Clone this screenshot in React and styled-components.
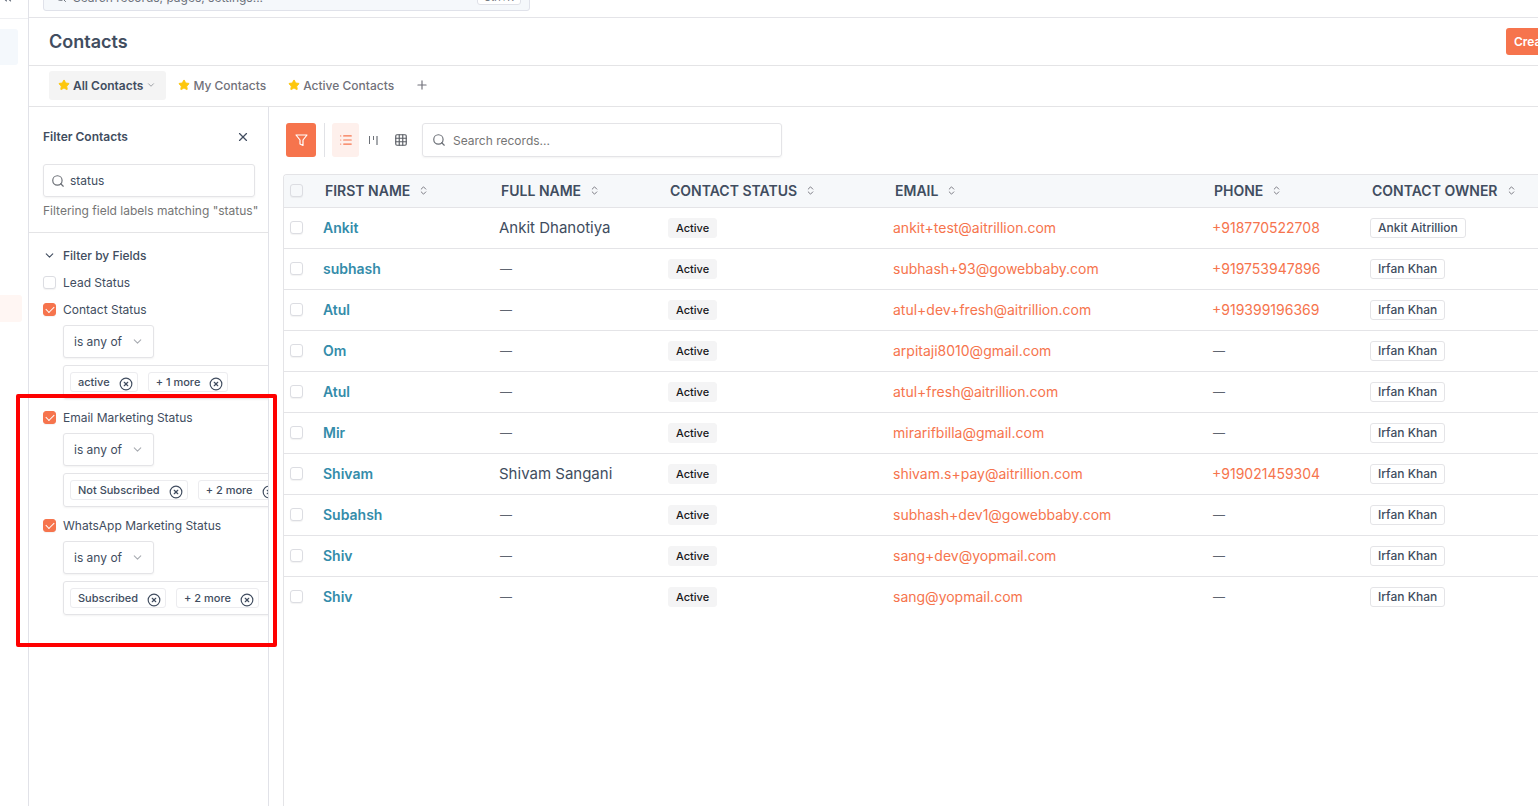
import styled, { createGlobalStyle } from 'styled-components';
import { ChevronDown, ChevronsLeft, ChevronsUpDown, CircleX, Grid3x3, List, Plus, Search, Star, X } from 'lucide-react';

const GlobalStyle = createGlobalStyle`
    * {
        box-sizing: border-box;
    }

    body {
        margin: 0;
        background: #fff;
        color: #414d60;
        font-family: Inter, "Open Sans", sans-serif;
        font-size: 12px;
        line-height: 16px;
    }

    button, input, select {
        font-family: inherit;
        color: inherit;
    }

    svg {
        display: block;
        flex-shrink: 0;
    }
`;

const Page = styled.div`
    position: relative;
    display: flex;
    min-height: 100vh;
    overflow: hidden;
`;

const Rail = styled.nav`
    flex: 0 0 29px;
    border-right: 1px solid #e1e2e8;
`;

const RailTop = styled.div`
    display: flex;
    align-items: flex-end;
    height: 19px;
    padding-bottom: 13px;
    border-bottom: 1px solid #eeeff2;
    overflow: hidden;

    button {
        padding: 0;
        border: 0;
        background: none;
        color: #5b6473;
    }
`;

const RailItem = styled.a`
    display: block;
    width: ${({ $width }) => $width}px;
    height: ${({ $height }) => $height}px;
    margin-top: ${({ $top }) => $top}px;
    border-radius: 0 3px 3px 0;
    background: ${({ $tone }) => $tone};
`;

const Content = styled.div`
    flex: 1;
    min-width: 0;
    display: flex;
    flex-direction: column;
`;

const TopBar = styled.div`
    display: flex;
    align-items: flex-end;
    height: 18px;
    padding: 0 14px 6px;
    border-bottom: 1px solid #e4e4e8;
    overflow: hidden;
`;

const GlobalSearch = styled.label`
    display: flex;
    align-items: center;
    gap: 6px;
    flex: 0 0 487px;
    height: 28px;
    padding: 0 8px 0 11px;
    border: 1px solid #e0e2ea;
    border-radius: 3px;
    background: #f5f8fb;
    color: #6c727c;

    input {
        flex: 1;
        min-width: 0;
        padding: 0;
        border: 0;
        background: none;
        outline: none;
        font-size: 12px;
    }

    input::placeholder {
        color: #6c727c;
    }
`;

const KeyHint = styled.kbd`
    padding: 0 6px;
    border: 1px solid #dfe1e8;
    border-radius: 3px;
    background: #fff;
    font-family: inherit;
    font-size: 10px;
    line-height: 14px;
`;

const TitleBar = styled.header`
    display: flex;
    align-items: center;
    justify-content: space-between;
    height: 48px;
    padding-left: 20px;
    border-bottom: 1px solid #e4e4e6;

    h1 {
        margin: 0;
        font-size: 18px;
        line-height: 24px;
        font-weight: 600;
    }
`;

const CreateSlot = styled.div`
    width: 32px;
    overflow: hidden;
`;

const CreateButton = styled.button`
    display: block;
    height: 27px;
    padding: 0 8px;
    border: 0;
    border-radius: 3px;
    background: #f6744d;
    color: #fff;
    font-size: 12px;
    font-weight: 600;
    white-space: nowrap;
`;

const Tabs = styled.nav`
    display: flex;
    align-items: center;
    gap: 3px;
    height: 41px;
    padding: 0 0 2px 20px;
    border-bottom: 1px solid #e4e4e6;
`;

const Tab = styled.button`
    display: flex;
    align-items: center;
    gap: 3px;
    height: 29px;
    padding: 0 10px 0 9px;
    border: 0;
    border-radius: 3px;
    background: ${({ $active }) => ($active ? '#f4f4f4' : 'none')};
    color: ${({ $active }) => ($active ? '#414d60' : '#71717a')};
    font-size: 12px;
    font-weight: ${({ $active }) => ($active ? 600 : 500)};
`;

const Columns = styled.div`
    flex: 1;
    display: flex;
`;

const FilterPanel = styled.aside`
    flex: 0 0 240px;
    min-width: 0;
    border-right: 1px solid #e1e2e8;
    overflow: hidden;
`;

const FilterHead = styled.div`
    padding: 20px 13px 13px 14px;
    border-bottom: 1px solid #e4e4e6;

    p {
        margin: 6px 0 0;
        font-size: 12px;
        color: #757575;
        white-space: nowrap;
    }
`;

const FilterTitle = styled.div`
    display: flex;
    align-items: center;
    justify-content: space-between;
    height: 20px;
    margin-bottom: 17px;

    h2 {
        margin: 0;
        font-size: 12px;
        font-weight: 600;
    }
`;

const IconButton = styled.button`
    display: flex;
    align-items: center;
    justify-content: center;
    height: ${({ $height }) => $height || 20}px;
    width: ${({ $width }) => $width || 24}px;
    padding: 0;
    border: 0;
    border-radius: 3px;
    background: ${({ $background }) => $background || 'none'};
    color: ${({ $color }) => $color || 'inherit'};
`;

const SearchBox = styled.label`
    display: flex;
    align-items: center;
    gap: ${({ $gap }) => $gap}px;
    width: ${({ $width }) => $width || '100%'};
    height: ${({ $height }) => $height || 33}px;
    padding: 0 ${({ $padding }) => $padding}px;
    border: 1px solid #e4e4e7;
    border-radius: 3px;
    box-shadow: 0 1px 2px rgba(0, 0, 0, 0.05);
    color: #6b6f76;

    input {
        flex: 1;
        min-width: 0;
        padding: 0;
        border: 0;
        outline: none;
        background: none;
        color: #414d60;
        font-size: 12px;
    }

    input::placeholder {
        color: #757575;
    }
`;

const FilterFields = styled.div`
    padding: 14px 0 0 14px;
`;

const FieldsToggle = styled.button`
    display: flex;
    align-items: center;
    gap: 7px;
    height: 16px;
    margin-bottom: 10px;
    padding: 0;
    border: 0;
    background: none;
    font-size: 12px;
    font-weight: 500;
`;

const Field = styled.div`
    margin-bottom: 8px;
`;

const FieldLabel = styled.label`
    display: flex;
    align-items: center;
    gap: 7px;
    height: 19px;
    font-size: 12px;
    white-space: nowrap;
`;

const Checkbox = styled.input.attrs({ type: 'checkbox' })`
    appearance: none;
    display: flex;
    align-items: center;
    justify-content: center;
    flex: 0 0 auto;
    width: 13px;
    height: 13px;
    margin: 0;
    border: 1px solid #dcdde2;
    border-radius: 3px;
    background: ${({ $background }) => $background || '#fff'};
    box-shadow: 0 1px 1px rgba(0, 0, 0, 0.05);

    &:checked {
        border-color: #f6744d;
        background: #f6744d;
    }

    &:checked::after {
        content: '';
        width: 7px;
        height: 4px;
        margin-bottom: 2px;
        border-left: 1px solid #fff;
        border-bottom: 1px solid #fff;
        transform: rotate(-45deg);
    }
`;

const Condition = styled.div`
    padding: 6px 0 1px 20px;
`;

const OperatorBox = styled.div`
    display: grid;
    width: 91px;
    align-items: center;

    select, svg {
        grid-area: 1 / 1;
    }

    select {
        appearance: none;
        width: 100%;
        height: 33px;
        padding: 0 10px;
        border: 1px solid #e4e4e7;
        border-radius: 3px;
        background: #fff;
        box-shadow: 0 1px 2px rgba(0, 0, 0, 0.05);
        font-size: 12px;
    }

    svg {
        justify-self: end;
        margin-right: 10px;
        color: #a9acb2;
        pointer-events: none;
    }
`;

const ValueBox = styled.div`
    display: flex;
    align-items: center;
    gap: 10px;
    width: 230px;
    height: 34px;
    margin-top: 7px;
    padding: 0 6px;
    border: 1px solid #e4e4e7;
    border-radius: 3px;
    box-shadow: 0 1px 2px rgba(0, 0, 0, 0.05);
`;

const Chip = styled.span`
    display: flex;
    align-items: center;
    gap: 9px;
    height: 20px;
    padding: 0 4px 0 7px;
    border: 1px solid #ececef;
    border-radius: 3px;
    font-size: 11px;
    font-weight: 500;
    white-space: nowrap;

    button {
        padding: 3px 0 0;
        border: 0;
        background: none;
    }
`;

const Main = styled.main`
    flex: 1;
    min-width: 0;
    display: flex;
    flex-direction: column;
    padding: 16px 0 0 14px;
`;

const Toolbar = styled.div`
    display: flex;
    align-items: center;
    height: 34px;
    margin: 0 0 17px 3px;
`;

const Divider = styled.span`
    width: 1px;
    height: 34px;
    margin: 0 7px 0 8px;
    background: #e1e2e6;
`;

const ViewButtons = styled.div`
    display: flex;
    gap: 2px;
    margin-right: 8px;
`;

const TableFrame = styled.div`
    flex: 1;
    border: 1px solid #e4e4e7;
    border-width: 1px 0 0 1px;
    border-radius: 4px 0 0 0;
    overflow: hidden;
`;

const Table = styled.table`
    width: 100%;
    table-layout: fixed;
    border-collapse: collapse;

    th, td {
        padding: 0;
        border-bottom: 1px solid #e4e4e7;
        text-align: left;
        white-space: nowrap;
    }

    tbody tr:last-child td {
        border-bottom: 0;
    }

    th {
        height: 32px;
        background: #f6f8fa;
        font-size: 14px;
        font-weight: 600;
    }

    td {
        height: 41px;
        font-size: 14px;
    }
`;

const CheckCell = styled.div`
    padding-left: 6px;
`;

const HeadCell = styled.div`
    display: flex;
    align-items: center;
    gap: 8px;
    padding-left: 2px;

    svg {
        color: #71717a;
    }
`;

const NameLink = styled.a`
    color: #348caa;
    font-weight: 600;
    text-decoration: none;
`;

const FullName = styled.span`
    font-size: 15px;
`;

const ContactLink = styled.a`
    color: #f6744d;
    text-decoration: none;
`;

const Badge = styled.span`
    display: inline-block;
    padding: 1px 7px;
    border: 1px solid ${({ $outline }) => ($outline ? '#e4e4e7' : '#f4f4f5')};
    border-radius: 3px;
    background: ${({ $outline }) => ($outline ? '#fff' : '#f4f4f5')};
    color: ${({ $outline }) => ($outline ? '#414d60' : '#18181b')};
    font-size: ${({ $outline }) => ($outline ? 12 : 11)}px;
    font-weight: 500;
    line-height: 16px;
    vertical-align: middle;
`;

const Empty = styled.span`
    padding-left: 1px;
    color: #5f6570;
    font-size: 12px;
`;

const Highlight = styled.div`
    position: absolute;
    left: 16px;
    top: 394px;
    width: 261px;
    height: 253px;
    border: 4px solid #fe0000;
    border-radius: 2px;
    pointer-events: none;
`;

const tabs = ['All Contacts', 'My Contacts', 'Active Contacts'];

const fields = [
    { label: 'Lead Status' },
    { label: 'Contact Status', value: 'active', more: '+ 1 more' },
    { label: 'Email Marketing Status', value: 'Not Subscribed', more: '+ 2 more' },
    { label: 'WhatsApp Marketing Status', value: 'Subscribed', more: '+ 2 more' },
];

const columns = [
    { label: 'FIRST NAME', width: 176 },
    { label: 'FULL NAME', width: 169 },
    { label: 'CONTACT STATUS', width: 225 },
    { label: 'EMAIL', width: 319 },
    { label: 'PHONE', width: 158 },
    { label: 'CONTACT OWNER' },
];

const contacts = [
    { first: 'Ankit', full: 'Ankit Dhanotiya', email: 'ankit+test@aitrillion.com', phone: '+918770522708', owner: 'Ankit Aitrillion' },
    { first: 'subhash', email: 'subhash+93@gowebbaby.com', phone: '+919753947896', owner: 'Irfan Khan' },
    { first: 'Atul', email: 'atul+dev+fresh@aitrillion.com', phone: '+919399196369', owner: 'Irfan Khan' },
    { first: 'Om', email: 'arpitaji8010@gmail.com', owner: 'Irfan Khan' },
    { first: 'Atul', email: 'atul+fresh@aitrillion.com', owner: 'Irfan Khan' },
    { first: 'Mir', email: 'mirarifbilla@gmail.com', owner: 'Irfan Khan' },
    { first: 'Shivam', full: 'Shivam Sangani', email: 'shivam.s+pay@aitrillion.com', phone: '+919021459304', owner: 'Irfan Khan' },
    { first: 'Subahsh', email: 'subhash+dev1@gowebbaby.com', owner: 'Irfan Khan' },
    { first: 'Shiv', email: 'sang+dev@yopmail.com', owner: 'Irfan Khan' },
    { first: 'Shiv', email: 'sang@yopmail.com', owner: 'Irfan Khan' },
];

const Col = styled.col`
    width: ${({ $width }) => ($width ? `${$width}px` : 'auto')};
`;

function FunnelIcon() {
    return (
        <svg width="13" height="13" viewBox="0 0 13 13" fill="none" stroke="currentColor" strokeWidth="1.2" strokeLinejoin="round">
            <path d="M1 1h11L8 6v5.5L5 10V6z" />
        </svg>
    );
}

function BoardIcon() {
    return (
        <svg width="11" height="11" viewBox="0 0 11 11" fill="none" stroke="currentColor">
            <path d="M1.5 1v8M5.5 1v4" />
            <path d="M9 1v9" strokeWidth="2" opacity="0.6" />
        </svg>
    );
}

function FilterField({ field }) {
    return (
        <Field>
            <FieldLabel>
                <Checkbox defaultChecked={Boolean(field.value)} />
                {field.label}
            </FieldLabel>
            {field.value && (
                <Condition>
                    <OperatorBox>
                        <select aria-label={`${field.label} operator`}>
                            <option>is any of</option>
                        </select>
                        <ChevronDown size={13} strokeWidth={2} />
                    </OperatorBox>
                    <ValueBox>
                        {[field.value, field.more].map((text) => (
                            <Chip key={text}>
                                {text}
                                <button type="button" aria-label={`Remove ${text}`}>
                                    <CircleX size={14} strokeWidth={2} />
                                </button>
                            </Chip>
                        ))}
                    </ValueBox>
                </Condition>
            )}
        </Field>
    );
}

function ContactsTable() {
    return (
        <TableFrame>
            <Table>
                <colgroup>
                    <Col $width={39} />
                    {columns.map((column) => <Col key={column.label} $width={column.width} />)}
                </colgroup>
                <thead>
                    <tr>
                        <th>
                            <CheckCell><Checkbox $background="#f6f8fa" aria-label="Select all" /></CheckCell>
                        </th>
                        {columns.map((column) => (
                            <th key={column.label}>
                                <HeadCell>
                                    {column.label}
                                    <ChevronsUpDown size={11} strokeWidth={2} />
                                </HeadCell>
                            </th>
                        ))}
                    </tr>
                </thead>
                <tbody>
                    {contacts.map((contact) => (
                        <tr key={contact.email}>
                            <td>
                                <CheckCell><Checkbox aria-label={`Select ${contact.first}`} /></CheckCell>
                            </td>
                            <td><NameLink href="#contact">{contact.first}</NameLink></td>
                            <td>{contact.full ? <FullName>{contact.full}</FullName> : <Empty>—</Empty>}</td>
                            <td><Badge>Active</Badge></td>
                            <td><ContactLink href={`mailto:${contact.email}`}>{contact.email}</ContactLink></td>
                            <td>
                                {contact.phone
                                    ? <ContactLink href={`tel:${contact.phone}`}>{contact.phone}</ContactLink>
                                    : <Empty>—</Empty>}
                            </td>
                            <td><Badge $outline>{contact.owner}</Badge></td>
                        </tr>
                    ))}
                </tbody>
            </Table>
        </TableFrame>
    );
}

function App() {
    return (
        <Page>
            <GlobalStyle />
            <Rail>
                <RailTop>
                    <button type="button" aria-label="Collapse menu"><ChevronsLeft size={14} /></button>
                </RailTop>
                <RailItem href="#home" aria-label="Home" $top={10} $width={18} $height={36} $tone="#f4f8fc" />
                <RailItem href="#contacts" aria-label="Contacts" $top={230} $width={22} $height={27} $tone="#fff6f3" />
            </Rail>
            <Content>
                <TopBar>
                    <GlobalSearch>
                        <Search size={12} />
                        <input placeholder="Search records, pages, settings..." />
                        <KeyHint>Ctrl+K</KeyHint>
                    </GlobalSearch>
                </TopBar>
                <TitleBar>
                    <h1>Contacts</h1>
                    <CreateSlot>
                        <CreateButton type="button">Create</CreateButton>
                    </CreateSlot>
                </TitleBar>
                <Tabs>
                    {tabs.map((tab, index) => (
                        <Tab key={tab} type="button" $active={index === 0}>
                            <Star size={12} fill="#fdc70c" color="#fdc70c" />
                            {tab}
                            {index === 0 && <ChevronDown size={10} color="#8d9096" />}
                        </Tab>
                    ))}
                    <IconButton type="button" aria-label="Add view" $width={30} $color="#71717a">
                        <Plus size={14} strokeWidth={2} />
                    </IconButton>
                </Tabs>
                <Columns>
                    <FilterPanel>
                        <FilterHead>
                            <FilterTitle>
                                <h2>Filter Contacts</h2>
                                <IconButton type="button" aria-label="Close"><X size={14} /></IconButton>
                            </FilterTitle>
                            <SearchBox $gap={5} $padding={7}>
                                <Search size={14} />
                                <input defaultValue="status" aria-label="Search fields" />
                            </SearchBox>
                            <p>Filtering field labels matching "status"</p>
                        </FilterHead>
                        <FilterFields>
                            <FieldsToggle type="button">
                                <ChevronDown size={13} />
                                Filter by Fields
                            </FieldsToggle>
                            {fields.map((field) => <FilterField key={field.label} field={field} />)}
                        </FilterFields>
                    </FilterPanel>
                    <Main>
                        <Toolbar>
                            <IconButton type="button" aria-label="Filter" $width={30} $height={34} $background="#f6744d" $color="#fff">
                                <FunnelIcon />
                            </IconButton>
                            <Divider />
                            <ViewButtons>
                                <IconButton type="button" aria-label="List view" $width={27} $height={34} $background="#fef0ec" $color="#f6744d">
                                    <List size={14} />
                                </IconButton>
                                <IconButton type="button" aria-label="Board view" $width={25} $height={34} $color="#6b6f76">
                                    <BoardIcon />
                                </IconButton>
                                <IconButton type="button" aria-label="Grid view" $width={26} $height={34} $color="#5b5f66">
                                    <Grid3x3 size={14} />
                                </IconButton>
                            </ViewButtons>
                            <SearchBox $width="360px" $height={34} $gap={7} $padding={9}>
                                <Search size={14} />
                                <input placeholder="Search records..." aria-label="Search records" />
                            </SearchBox>
                        </Toolbar>
                        <ContactsTable />
                    </Main>
                </Columns>
            </Content>
            <Highlight />
        </Page>
    );
}

export default App;
